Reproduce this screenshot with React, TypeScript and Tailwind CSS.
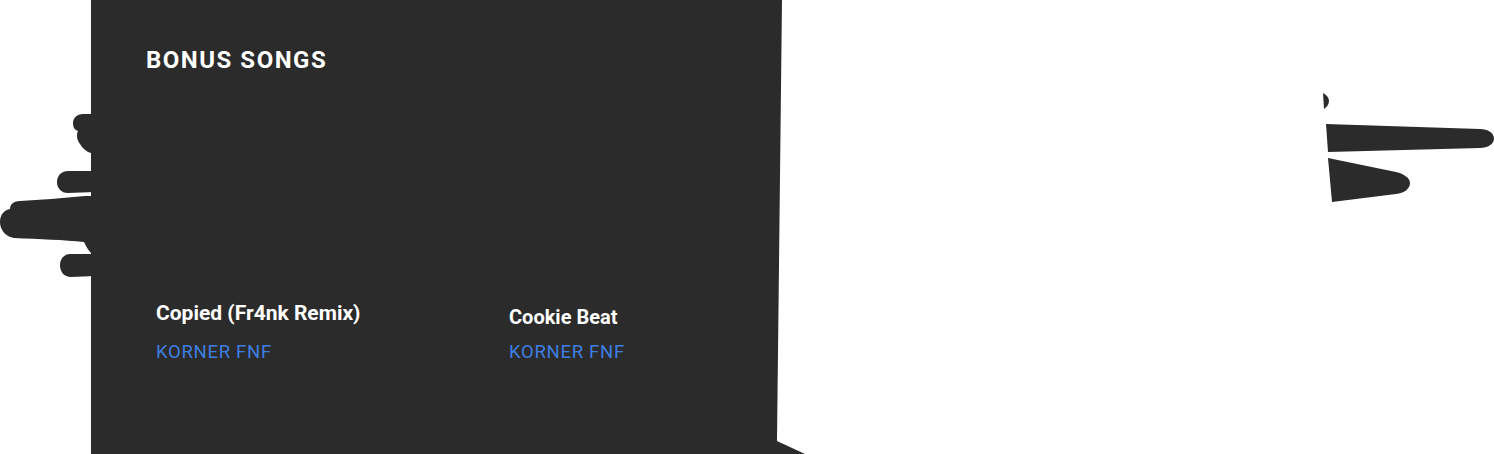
import React from 'react';

interface Song {
  title: string;
  artist: string;
  lower?: boolean;
}

const SONGS: Song[] = [
  { title: 'Copied (Fr4nk Remix)', artist: 'KORNER FNF' },
  { title: 'Cookie Beat', artist: 'KORNER FNF', lower: true },
];

// Hand-drawn pointing fingers around the panel
const Hands: React.FC = () => (
  <svg
    className="absolute left-0 top-0 pointer-events-none"
    width="1494"
    height="454"
    viewBox="0 0 1494 454"
    fill="#2b2b2b"
  >
    {/* left side */}
    <path d="M95 114 L83 114 C77 114 73 118 73 123 C73 128 75 130 78 131 C76 135 77 140 80 144 C83 149 87 152 91 153 L95 153 Z" />
    <path d="M95 171 L68 171 C61 171 57 176 57 182 C57 188 61 193 68 193 L95 192 Z" />
    <path d="M95 196 L85 196 C62 198 40 200 20 201 C14 201 10 204 10 209 C4 210 0 215 0 222 C0 230 6 237 14 238 C40 239 64 240 84 242 C86 246 88 250 91 253 L95 253 Z" />
    <path d="M95 254 L70 254 C64 254 60 259 60 265 C60 272 64 277 71 277 L95 276 Z" />
    {/* right side */}
    <path d="M1323 93 C1327 95 1329 98 1329 101 C1329 104 1327 107 1324 109 Z" />
    <path d="M1326 124 L1480 129 C1488 129 1494 133 1494 138.5 C1494 144 1488 148 1480 148 L1328 152 Z" />
    <path d="M1328 158 L1396 172 C1404 174 1410 178 1410 183 C1410 189 1404 193 1396 194 L1332 202 Z" />
  </svg>
);

const App: React.FC = () => {
  return (
    <div className="relative w-[1494px] h-[454px] overflow-hidden bg-white font-['Roboto',sans-serif]">
      {/* Panel */}
      <div className="ml-[91px] w-[714px] h-[454px] bg-[#2b2b2b] [clip-path:polygon(0_0,691px_0,686px_441px,714px_454px,0_454px)]">
        <div className="pl-[55px] pt-[48px]">
          <h2 className="text-[24px] leading-none font-bold tracking-[1.5px] text-white">BONUS SONGS</h2>
        </div>

        <div className="mt-[231px] pl-[65px] grid grid-cols-[353px_220px]">
          {SONGS.map((s) => (
            <div key={s.title} className="flex flex-col">
              <div className={s.lower ? 'h-[40px] pt-[4px] text-[20px] leading-none' : 'h-[40px] text-[21px] leading-none'}>
                <span className="font-bold text-white">{s.title}</span>
              </div>
              <span className="text-[18.5px] leading-none tracking-[0.7px] text-[#3e7ee0]">{s.artist}</span>
            </div>
          ))}
        </div>
      </div>

      <Hands />
    </div>
  );
};

export default App;
